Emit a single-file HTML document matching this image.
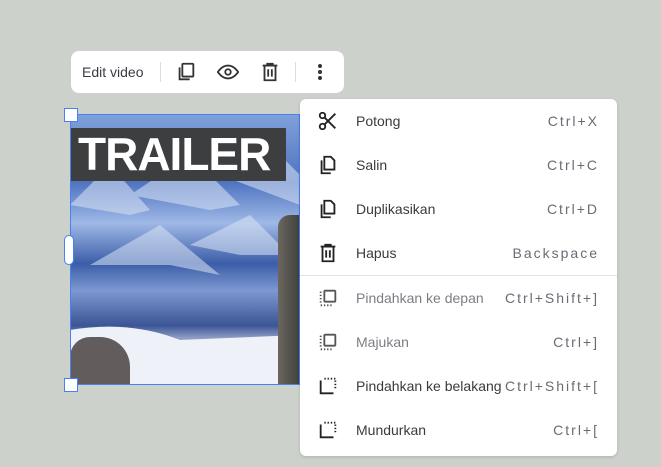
<!DOCTYPE html><html><head><style>
body{margin:0;width:661px;height:467px;background:#cdd1cc;font-family:"Liberation Sans",sans-serif;position:relative;overflow:hidden}
.tb{position:absolute;left:71px;top:51px;width:273px;height:42px;background:#fff;border-radius:8px}
.img{position:absolute;left:70px;top:115px;width:230px;height:270px;overflow:hidden;
background:linear-gradient(180deg,#7fa0d8 0%,#4f74c0 25%,#9fb8e6 40%,#3b5ea8 55%,#7d98d0 65%,#3b5596 78%,#eef2f8 88%,#dfe6f2 100%)}
.m{position:absolute;left:300px;top:99px;width:317px;height:357px;background:#fff;border-radius:6px;box-shadow:0 1px 3px rgba(0,0,0,.15)}
.r{position:absolute;left:0;width:317px;height:44px;font-size:14px;color:#3a3a40}
.r .t{position:absolute;left:56px;top:14px}
.r .k{position:absolute;right:18px;top:14px;letter-spacing:2px;color:#6b6b75}
.r svg{position:absolute;left:17px;top:11px}
.g{color:#7d7d85!important}
.h{position:absolute;width:14px;height:14px;background:#fff;border:1.5px solid #4a7ff0;box-sizing:border-box}
</style></head><body>
<div class="tb">
<span style="position:absolute;left:11px;top:13px;font-size:14px;color:#3a3a44">Edit video</span>
<div style="position:absolute;left:89px;top:11px;width:1px;height:20px;background:#ddd"></div>
<svg style="position:absolute;left:104px;top:10px" width="22" height="22" viewBox="0 0 24 24" fill="none" stroke="#333" stroke-width="2"><rect x="8" y="3" width="12" height="14" rx="1"/><path d="M5 7v13h11"/></svg>
<svg style="position:absolute;left:145px;top:10px" width="24" height="22" viewBox="0 0 24 24" fill="none" stroke="#333" stroke-width="2"><path d="M1 12s4-7 11-7 11 7 11 7-4 7-11 7S1 12 1 12z"/><circle cx="12" cy="12" r="3"/></svg>
<svg style="position:absolute;left:188px;top:10px" width="22" height="22" viewBox="0 0 24 24" fill="none" stroke="#333" stroke-width="2"><path d="M4 5h16M9 5V3h6v2M6 5v16h12V5M10 9v8M14 9v8"/></svg>
<div style="position:absolute;left:224px;top:11px;width:1px;height:20px;background:#ddd"></div>
<svg style="position:absolute;left:246px;top:12px" width="6" height="18"><circle cx="3" cy="3" r="2" fill="#333"/><circle cx="3" cy="9" r="2" fill="#333"/><circle cx="3" cy="15" r="2" fill="#333"/></svg>
</div>
<div class="img">
<svg style="position:absolute;left:0;top:0" width="230" height="270"><g fill="#dbe5f6" opacity=".55"><path d="M0 90L40 50 80 95 60 100z"/><path d="M60 80L120 40 170 90 140 95z"/><path d="M150 60L200 30 230 60 230 90z"/><path d="M20 150L90 110 150 160 100 150z"/><path d="M120 130L180 100 220 140 170 140z"/></g><path d="M0 215Q60 205 110 225L230 220V270H0z" fill="#eef2f8"/></svg>
<div style="position:absolute;left:208px;top:100px;width:30px;height:170px;background:linear-gradient(90deg,#6b6660,#2e3230);border-radius:12px 0 0 0"></div>
<div style="position:absolute;left:0;top:222px;width:60px;height:48px;background:#4a4242;border-radius:20px 30px 0 0;opacity:.85"></div>
<div style="position:absolute;left:1px;top:13px;width:215px;height:53px;background:#3d3e40;color:#fff;font-weight:bold;font-size:46px;line-height:53px;padding-left:7px;box-sizing:border-box;letter-spacing:-1px">TRAILER</div>
</div>
<div style="position:absolute;left:70px;top:114px;width:230px;height:271px;border:1.5px solid #4a7ff0;box-sizing:border-box"></div>
<div class="h" style="left:64px;top:108px"></div>
<div class="h" style="left:64px;top:378px"></div>
<div style="position:absolute;left:64px;top:235px;width:10px;height:30px;background:#fff;border:1.5px solid #4a7ff0;border-radius:6px;box-sizing:border-box"></div>
<div class="m">
<div class="r" style="top:0"><svg width="22" height="22" viewBox="0 0 24 24" fill="none" stroke="#222" stroke-width="2"><circle cx="6" cy="6" r="3"/><circle cx="6" cy="18" r="3"/><path d="M8 8l12 12M8 16L20 4"/></svg><span class="t">Potong</span><span class="k">Ctrl+X</span></div>
<div class="r" style="top:44px"><svg width="22" height="22" viewBox="0 0 24 24" fill="none" stroke="#222" stroke-width="2"><path d="M8 3h7l4 4v10H8z"/><path d="M5 7v14h10"/></svg><span class="t">Salin</span><span class="k">Ctrl+C</span></div>
<div class="r" style="top:88px"><svg width="22" height="22" viewBox="0 0 24 24" fill="none" stroke="#222" stroke-width="2"><path d="M8 3h7l4 4v10H8z"/><path d="M5 7v14h10"/></svg><span class="t">Duplikasikan</span><span class="k">Ctrl+D</span></div>
<div class="r" style="top:132px"><svg width="22" height="22" viewBox="0 0 24 24" fill="none" stroke="#222" stroke-width="2"><path d="M4 5h16M9 5V3h6v2M6 5v16h12V5M10 9v8M14 9v8"/></svg><span class="t">Hapus</span><span class="k">Backspace</span></div>
<div style="position:absolute;left:0;top:176px;width:317px;height:1px;background:#e3e3e3"></div>
<div class="r" style="top:177px"><svg width="22" height="22" viewBox="0 0 24 24" fill="none" stroke="#555" stroke-width="2"><rect x="8" y="4" width="12" height="12" rx="1"/><path d="M4 5v12M4 20h14" stroke-dasharray="1.5 2"/></svg><span class="t g">Pindahkan ke depan</span><span class="k">Ctrl+Shift+]</span></div>
<div class="r" style="top:221px"><svg width="22" height="22" viewBox="0 0 24 24" fill="none" stroke="#555" stroke-width="2"><rect x="8" y="4" width="12" height="12" rx="1"/><path d="M4 5v12M4 20h14" stroke-dasharray="1.5 2"/></svg><span class="t g">Majukan</span><span class="k">Ctrl+]</span></div>
<div class="r" style="top:265px"><svg width="22" height="22" viewBox="0 0 24 24" fill="none" stroke="#222" stroke-width="2"><path d="M4 6v14h14"/><path d="M8 4h12v12" stroke-dasharray="1.5 2"/></svg><span class="t">Pindahkan ke belakang</span><span class="k">Ctrl+Shift+[</span></div>
<div class="r" style="top:309px"><svg width="22" height="22" viewBox="0 0 24 24" fill="none" stroke="#222" stroke-width="2"><path d="M4 6v14h14"/><path d="M8 4h12v12" stroke-dasharray="1.5 2"/></svg><span class="t">Mundurkan</span><span class="k">Ctrl+[</span></div>
</div>
</body></html>
